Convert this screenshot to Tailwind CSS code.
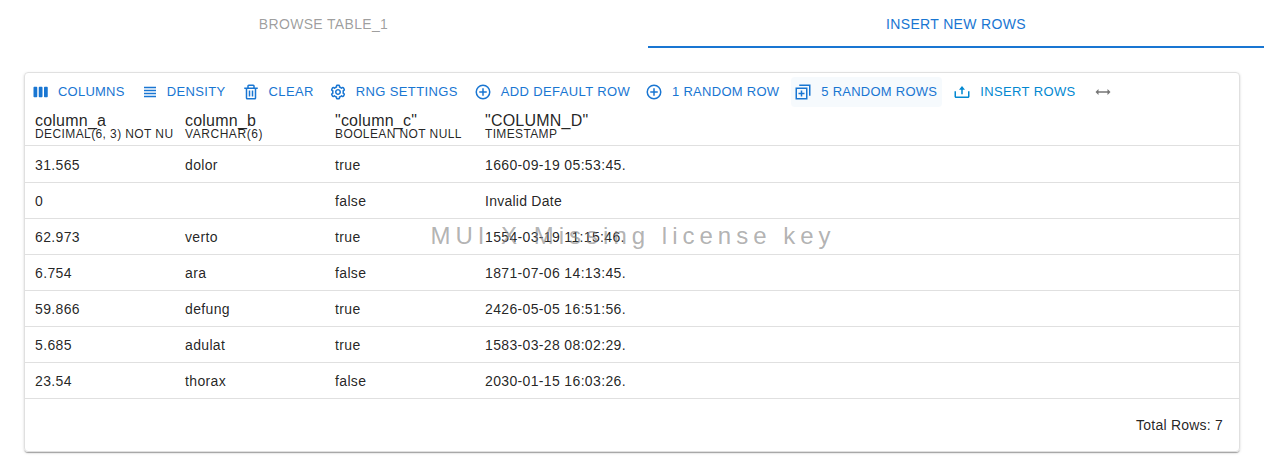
<!DOCTYPE html>
<html lang="en"><head><meta charset="utf-8"><title>Insert rows</title>
<script src="https://cdn.jsdelivr.net/npm/@tailwindcss/browser@4"></script></head>
<body class="bg-white h-[476px] overflow-hidden font-['Liberation_Sans',Arial,sans-serif] text-black/87">
<nav class="flex h-12 text-sm tracking-[0.33px]">
<div class="ml-8 flex w-[583px] items-center justify-center text-black/40">BROWSE TABLE_1</div>
<div class="ml-[33px] flex w-[616px] items-center justify-center border-b-2 border-[#1976d2] pt-0.5 text-[#1976d2]">INSERT NEW ROWS</div>
</nav>
<main class="relative mx-6 mt-6 flex h-[380px] flex-col rounded border border-[#e0e0e0] shadow-[0_2px_1px_-1px_rgba(0,0,0,0.2),0_1px_1px_0_rgba(0,0,0,0.14),0_1px_3px_0_rgba(0,0,0,0.12)]">
<div class="flex h-[35px] shrink-0 gap-2 px-1 pt-1 text-[13px] leading-[22px] tracking-[0.371px] whitespace-nowrap text-[#1976d2]">
<div class="flex h-[30px] items-center rounded px-[5px] tracking-[0.23px]"><svg class="-ml-0.5 mr-2 size-[18px] fill-current" viewBox="0 0 24 24"><path d="M6 5H3c-.55 0-1 .45-1 1v12c0 .55.45 1 1 1h3c.55 0 1-.45 1-1V6c0-.55-.45-1-1-1zm14 0h-3c-.55 0-1 .45-1 1v12c0 .55.45 1 1 1h3c.55 0 1-.45 1-1V6c0-.55-.45-1-1-1zm-7 0h-3c-.55 0-1 .45-1 1v12c0 .55.45 1 1 1h3c.55 0 1-.45 1-1V6c0-.55-.45-1-1-1z"/></svg>COLUMNS</div>
<div class="flex h-[30px] items-center rounded px-[5px]"><svg class="-ml-0.5 mr-2 size-[18px] fill-current" viewBox="0 0 24 24"><path d="M4 15h16v-2H4v2zm0 4h16v-2H4v2zm0-8h16V9H4v2zm0-6v2h16V5H4z"/></svg>DENSITY</div>
<div class="flex h-[30px] items-center rounded pr-1 pl-[5px]"><svg class="-ml-0.5 mr-[9px] size-[18px] fill-current" viewBox="0 0 24 24"><path d="M5 20a2 2 0 0 0 2 2h10a2 2 0 0 0 2-2V8h2V6h-4V4a2 2 0 0 0-2-2H9a2 2 0 0 0-2 2v2H3v2h2zM9 4h6v2H9zM8 8h9v12H7V8z"/><path d="M9 10h2v8H9zm4 0h2v8h-2z"/></svg>CLEAR</div>
<div class="flex h-[30px] items-center rounded px-[5px]"><svg class="-ml-0.5 mr-[9px] size-[18px] fill-current" viewBox="0 0 24 24"><path d="M12 16c2.206 0 4-1.794 4-4s-1.794-4-4-4-4 1.794-4 4 1.794 4 4 4zm0-6c1.084 0 2 .916 2 2s-.916 2-2 2-2-.916-2-2 .916-2 2-2z"/><path d="m2.845 16.136 1 1.73c.531.917 1.809 1.261 2.73.73l.529-.306A8.1 8.1 0 0 0 9 19.402V20c0 1.103.897 2 2 2h2c1.103 0 2-.897 2-2v-.598a8.132 8.132 0 0 0 1.896-1.111l.529.306c.923.53 2.198.188 2.731-.731l.999-1.729a2.001 2.001 0 0 0-.731-2.732l-.505-.292a7.718 7.718 0 0 0 0-2.224l.505-.292a2.002 2.002 0 0 0 .731-2.732l-.999-1.729c-.531-.92-1.808-1.265-2.731-.732l-.529.306A8.1 8.1 0 0 0 15 4.598V4c0-1.103-.897-2-2-2h-2c-1.103 0-2 .897-2 2v.598a8.132 8.132 0 0 0-1.896 1.111l-.529-.306c-.924-.531-2.2-.187-2.731.732l-.999 1.729a2.001 2.001 0 0 0 .731 2.732l.505.292a7.683 7.683 0 0 0 0 2.223l-.505.292a2.003 2.003 0 0 0-.731 2.733zm3.326-2.758A5.703 5.703 0 0 1 6 12c0-.462.058-.926.17-1.378a.999.999 0 0 0-.47-1.108l-1.123-.65.998-1.729 1.145.662a.997.997 0 0 0 1.188-.142 6.071 6.071 0 0 1 2.384-1.399A1 1 0 0 0 11 5.3V4h2v1.3a1 1 0 0 0 .708.956 6.083 6.083 0 0 1 2.384 1.399.999.999 0 0 0 1.188.142l1.144-.661 1 1.729-1.124.649a1 1 0 0 0-.47 1.108c.112.452.17.916.17 1.378 0 .461-.058.925-.171 1.378a1 1 0 0 0 .471 1.108l1.123.649-.998 1.729-1.145-.661a.996.996 0 0 0-1.188.142 6.071 6.071 0 0 1-2.384 1.399A1 1 0 0 0 13 18.7l.002 1.3H11v-1.3a1 1 0 0 0-.708-.956 6.083 6.083 0 0 1-2.384-1.399.992.992 0 0 0-1.188-.141l-1.144.662-1-1.729 1.124-.651a1 1 0 0 0 .471-1.108z"/></svg>RNG SETTINGS</div>
<div class="flex h-[30px] items-center rounded pr-1 pl-[5px]"><svg class="-ml-0.5 mr-[9px] size-[18px] fill-none stroke-current stroke-2" viewBox="0 0 24 24"><circle cx="12" cy="12" r="9"/><path d="M12 7v10M7 12h10"/></svg>ADD DEFAULT ROW</div>
<div class="flex h-[30px] items-center rounded pr-1 pl-[5px] tracking-[0.27px]"><svg class="-ml-0.5 mr-[9px] size-[18px] fill-none stroke-current stroke-2" viewBox="0 0 24 24"><circle cx="12" cy="12" r="9"/><path d="M12 7v10M7 12h10"/></svg>1 RANDOM ROW</div>
<div class="flex h-[30px] items-center rounded bg-[#1976d2]/4 pr-[5px] pl-[5px] tracking-[0.25px]"><svg class="-ml-0.5 mr-[9px] size-[18px] fill-none stroke-current stroke-2" viewBox="0 0 24 24"><path d="M3 7h14v14H3zM7 3h14v14M10 10v8M6 14h8"/></svg>5 RANDOM ROWS</div>
<div class="flex h-[30px] items-center rounded px-[5px] text-[#0288d1]"><svg class="-ml-0.5 mr-[9px] size-[18px] fill-current" viewBox="0 0 24 24"><path d="M11 15h2V9h3l-4-5-4 5h3z"/><path d="M20 18H4v-7H2v7c0 1.103.897 2 2 2h16c1.103 0 2-.897 2-2v-7h-2v7z"/></svg>INSERT ROWS</div>
<div class="flex h-[30px] items-center pl-[5px] text-[#757575]"><svg class="size-[18px] fill-current" viewBox="0 0 24 24"><path d="m6 8-4 4 4 4v-3h12v3l4-4-4-4v3H6z"/></svg></div>
</div>
<div class="grid h-[38px] shrink-0 grid-cols-[150px_150px_150px_150px] border-b border-[#e0e0e0] whitespace-nowrap">
<div class="overflow-hidden px-2.5 pt-[5px]"><div class="text-base leading-4 tracking-[0.22px]">column_a</div><div class="-mt-px text-xs leading-3 tracking-[0.4px]">DECIMAL(6, 3) NOT NU</div></div>
<div class="overflow-hidden px-2.5 pt-[5px]"><div class="text-base leading-4 tracking-[0.22px]">column_b</div><div class="-mt-px text-xs leading-3 tracking-[0.55px]">VARCHAR(6)</div></div>
<div class="overflow-hidden px-2.5 pt-[5px]"><div class="text-base leading-4 tracking-[0.22px]">"column_c"</div><div class="-mt-px text-xs leading-3 tracking-[0.4px]">BOOLEAN NOT NULL</div></div>
<div class="overflow-hidden px-2.5 pt-[5px]"><div class="text-base leading-4 tracking-[0.22px]">"COLUMN_D"</div><div class="-mt-px text-xs leading-3 tracking-[0.35px]">TIMESTAMP</div></div>
</div>
<div class="text-sm tracking-[0.35px] whitespace-nowrap">
<div class="grid h-[37px] grid-cols-[150px_150px_150px_150px] items-center border-b border-[#e0e0e0] pt-0.5 *:px-2.5"><div>31.565</div><div>dolor</div><div>true</div><div>1660-09-19 05:53:45.</div></div>
<div class="grid h-9 grid-cols-[150px_150px_150px_150px] items-center border-b border-[#e0e0e0] *:px-2.5"><div>0</div><div></div><div>false</div><div class="tracking-[0.25px]">Invalid Date</div></div>
<div class="grid h-9 grid-cols-[150px_150px_150px_150px] items-center border-b border-[#e0e0e0] *:px-2.5"><div>62.973</div><div>verto</div><div>true</div><div>1554-03-19 11:15:46.</div></div>
<div class="grid h-9 grid-cols-[150px_150px_150px_150px] items-center border-b border-[#e0e0e0] *:px-2.5"><div>6.754</div><div>ara</div><div>false</div><div>1871-07-06 14:13:45.</div></div>
<div class="grid h-9 grid-cols-[150px_150px_150px_150px] items-center border-b border-[#e0e0e0] *:px-2.5"><div>59.866</div><div>defung</div><div>true</div><div>2426-05-05 16:51:56.</div></div>
<div class="grid h-9 grid-cols-[150px_150px_150px_150px] items-center border-b border-[#e0e0e0] *:px-2.5"><div>5.685</div><div>adulat</div><div>true</div><div>1583-03-28 08:02:29.</div></div>
<div class="grid h-9 grid-cols-[150px_150px_150px_150px] items-center border-b border-[#e0e0e0] *:px-2.5"><div>23.54</div><div>thorax</div><div>false</div><div>2030-01-15 16:03:26.</div></div>
</div>
<div class="flex flex-1 items-center justify-end pr-4 text-sm tracking-[0.22px]">Total Rows: 7</div>
<div class="pointer-events-none absolute inset-x-0 top-[145px] pl-0.5 text-center text-2xl leading-9 tracking-[5px] whitespace-nowrap text-[#828282]/62">MUI X Missing license key</div>
</main>
</body></html>
